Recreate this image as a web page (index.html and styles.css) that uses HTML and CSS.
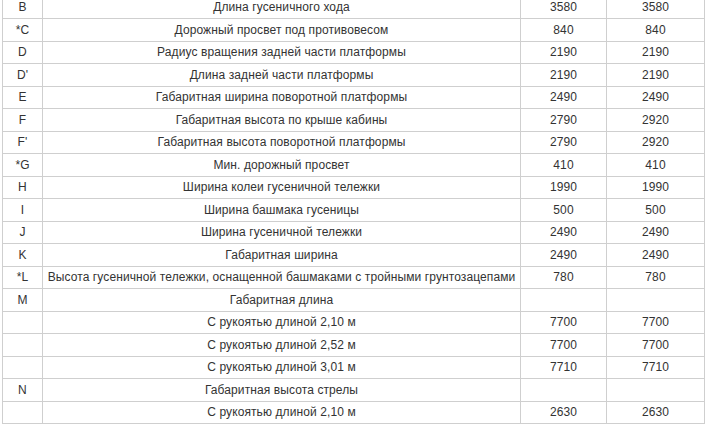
FILE: index.html
```html
<!DOCTYPE html>
<html lang="ru">
<head>
<meta charset="utf-8">
<link rel="stylesheet" href="styles.css">
</head>
<body>
<table class="spec">
<colgroup><col class="c-key"><col class="c-name"><col class="c-val"><col class="c-val2"></colgroup>
<tbody>
<tr><td>B</td><td>Длина гусеничного хода</td><td>3580</td><td>3580</td></tr>
<tr><td>*C</td><td>Дорожный просвет под противовесом</td><td>840</td><td>840</td></tr>
<tr><td>D</td><td>Радиус вращения задней части платформы</td><td>2190</td><td>2190</td></tr>
<tr><td>D'</td><td>Длина задней части платформы</td><td>2190</td><td>2190</td></tr>
<tr><td>E</td><td>Габаритная ширина поворотной платформы</td><td>2490</td><td>2490</td></tr>
<tr><td>F</td><td>Габаритная высота по крыше кабины</td><td>2790</td><td>2920</td></tr>
<tr><td>F'</td><td>Габаритная высота поворотной платформы</td><td>2790</td><td>2920</td></tr>
<tr><td>*G</td><td>Мин. дорожный просвет</td><td>410</td><td>410</td></tr>
<tr><td>H</td><td>Ширина колеи гусеничной тележки</td><td>1990</td><td>1990</td></tr>
<tr><td>I</td><td>Ширина башмака гусеницы</td><td>500</td><td>500</td></tr>
<tr><td>J</td><td>Ширина гусеничной тележки</td><td>2490</td><td>2490</td></tr>
<tr><td>K</td><td>Габаритная ширина</td><td>2490</td><td>2490</td></tr>
<tr><td>*L</td><td>Высота гусеничной тележки, оснащенной башмаками с тройными грунтозацепами</td><td>780</td><td>780</td></tr>
<tr><td>M</td><td>Габаритная длина</td><td></td><td></td></tr>
<tr><td></td><td>С рукоятью длиной 2,10 м</td><td>7700</td><td>7700</td></tr>
<tr><td></td><td>С рукоятью длиной 2,52 м</td><td>7700</td><td>7700</td></tr>
<tr><td></td><td>С рукоятью длиной 3,01 м</td><td>7710</td><td>7710</td></tr>
<tr><td>N</td><td>Габаритная высота стрелы</td><td></td><td></td></tr>
<tr><td></td><td>С рукоятью длиной 2,10 м</td><td>2630</td><td>2630</td></tr>
</tbody>
</table>
</body>
</html>
```
FILE: styles.css
```css
html, body {
  margin: 0;
  padding: 0;
  background: #fff;
  overflow: hidden;
}
body {
  padding-left: 2px;
}
.spec {
  margin-top: -4.5px;
  width: 702px;
  border-collapse: collapse;
  table-layout: fixed;
  font-family: "Liberation Sans", Arial, sans-serif;
  font-size: 12px;
  letter-spacing: 0.1px;
  color: #333;
}
.c-key { width: 40px; }
.c-name { width: 478px; }
.c-val { width: 86px; }
.c-val2 { width: 98px; }
.spec tr { height: 22.5px; }
.spec td {
  border: 1px solid #cfcfcf;
  padding: 0 2px;
  text-align: center;
  vertical-align: middle;
  line-height: 14px;
  white-space: nowrap;
}
```
